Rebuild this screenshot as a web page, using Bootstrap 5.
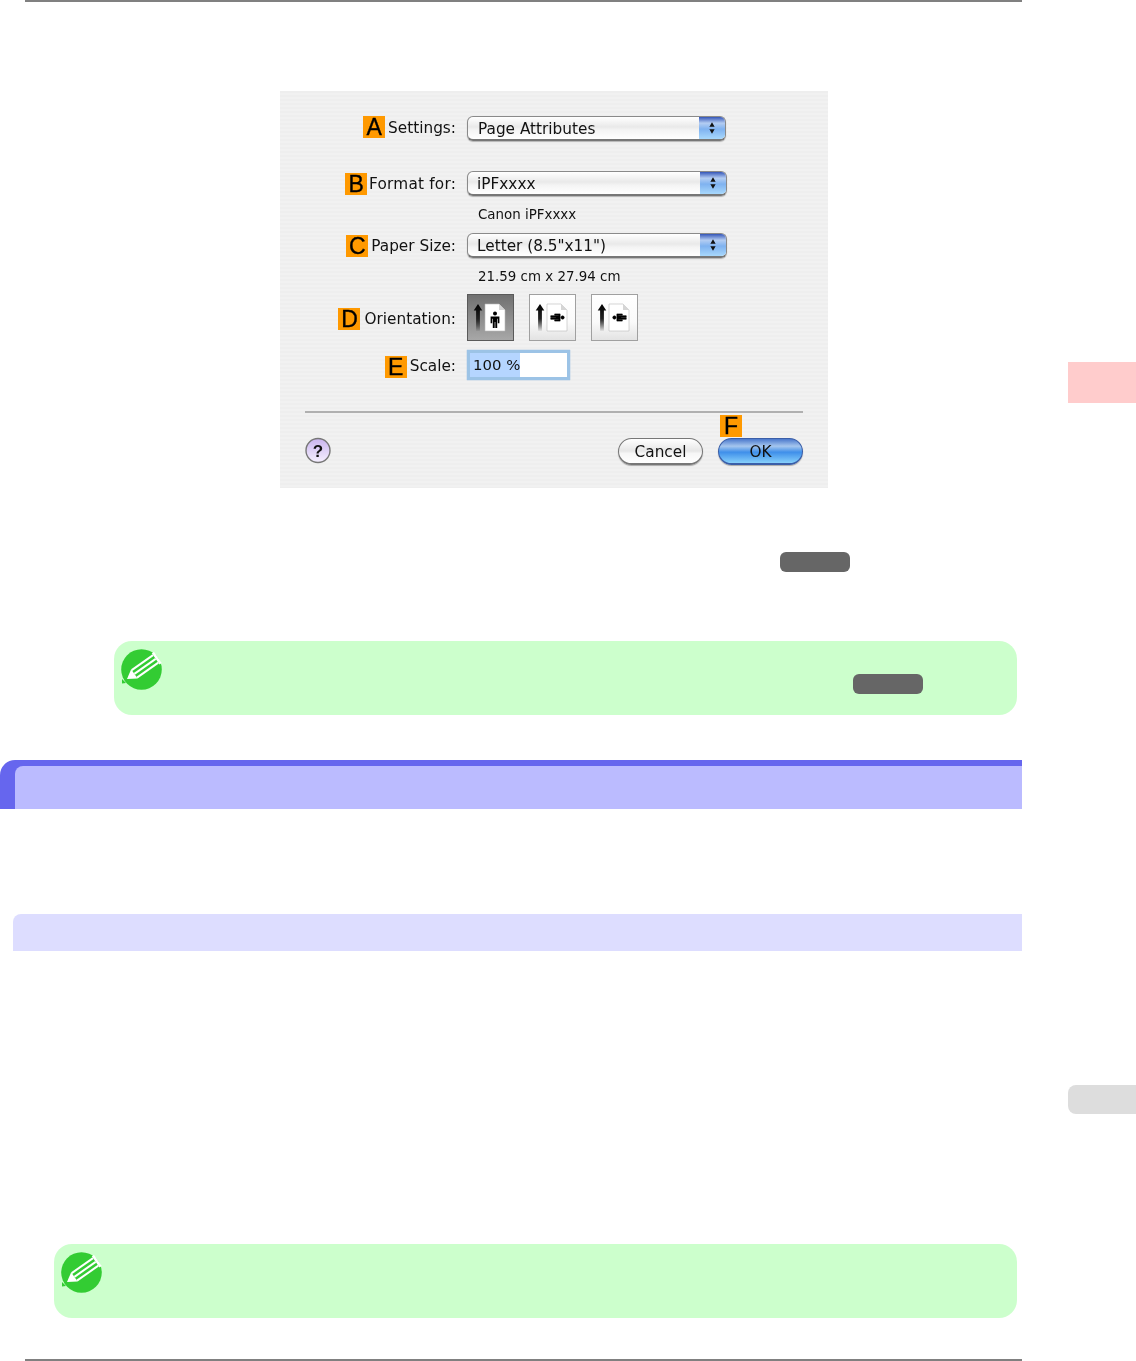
<!DOCTYPE html>
<html lang="en">
<head>
<meta charset="utf-8">
<title>Page Attributes</title>
<link href="https://cdn.jsdelivr.net/npm/bootstrap@5.3.0/dist/css/bootstrap.min.css" rel="stylesheet">
<style>
html,body{margin:0;background:#fff}
.sheet{width:1136px;height:1361px;overflow:hidden}
.main-col{width:1022px;flex:none}
.side-col{width:114px;flex:none;padding-left:46px}
.tab-pink{height:41px;margin-top:362px;background:#ffcccc}
.tab-grey{height:29px;margin-top:682px;background:#dddddd;border-radius:8px 0 0 8px}
.rule-top{height:2px;margin-left:25px;background:#808080}
.rule-bottom{height:2px;margin-left:25px;margin-top:41px;background:#808080}
.dlg{width:548px;height:397px;margin-left:280px;margin-top:89px;padding:25px 25px 0 0;font-family:"DejaVu Sans",sans-serif;font-size:15.3px;color:#111;line-height:1;
background:repeating-linear-gradient(180deg,#eeeeee 0,#eeeeee 2px,#f1f1f1 2px,#f1f1f1 4px);filter:blur(.45px)}
.lbl{width:176px;flex:none;margin-right:11px;gap:3px}
.key{width:22px;height:22px;background:#ff9900;color:#000;font-family:"Liberation Sans",sans-serif;font-size:23px;line-height:22px;text-align:center;-webkit-text-stroke:.35px #000}
.pop{width:259px;height:25px;border:1px solid #8a8a8a;border-bottom:2px solid #777;border-radius:6px;background:linear-gradient(180deg,#fff 0,#e9e9e9 45%,#f4f4f4 60%,#fff 100%);padding-left:10px;overflow:hidden;box-shadow:0 1px 1px rgba(0,0,0,.25)}
.pop span{padding-top:4px}
.pop.wide{padding-left:9px;width:260px}
.pop-arrows{width:26px;height:100%;background:linear-gradient(180deg,#3556b8 0,#b4cdf2 28%,#7fb2f0 55%,#a8d8fc 100%)}
.mt-b{margin-top:30px}.mt-s1{margin-top:10px}.mt-c{margin-top:11px}.mt-d{margin-top:10px}.mt-e{margin-top:9px}
.subtxt{margin-left:198px;height:16px;line-height:18px;font-size:13.4px}
.ori{width:47px;height:47px;flex:none;display:block}
.ori-gap{gap:15px}
.row-a .key{margin-top:-3px}
.row-b .lbl{gap:2px}
.row-b .lbl,.row-c .lbl{padding-top:3px}
.row-b .key,.row-c .key{margin-top:-2px}
.row-b .lbl span:last-child{letter-spacing:.2px}
.row-d .lbl{padding-top:4px;gap:4px}
.row-d .key{margin-top:-2px}
.row-e .lbl{padding-top:3px;gap:3px}
.row-e .key{margin-top:1px}
.scale-box{width:103px;height:30px;border:3px solid #9cc3e6;background:#fff;box-shadow:0 0 1px #6fa3d8;line-height:24px}
.sel-text{display:inline-block;height:24px;background:#b5d5ff;padding:0 0 0 3px;font-size:14.9px}
.sep{height:2px;margin:31px 0 0 25px;width:498px;background:#b0b0b0}
.foot{margin-left:25px;width:498px;margin-top:2px}
.help{width:26px;height:27px;display:block;margin-bottom:1px}
.pill-btn{width:85px;height:27px;border-radius:14px;border:1px solid #777;border-bottom-width:2px;text-align:center;line-height:26px;box-shadow:0 1px 1px rgba(0,0,0,.3)}
.pill-cancel{background:linear-gradient(180deg,#fff 0,#e6e6e6 50%,#f6f6f6 60%,#fff 100%)}
.pill-ok{background:linear-gradient(180deg,#4a78cc 0,#a5c6ee 30%,#3f8fea 55%,#86d0fb 100%);border-color:#3a5ea8}
.ok-col{margin-left:15px}
.key-f{margin:0 0 1px 2px}
.grey-pill{width:70px;height:20px;background:#666666;border-radius:6px}
.pill-page{margin:64px 0 0 780px}
.note-box{height:74px;background:#ccffcc;border-radius:18px;padding:8px 0 0 7px}
.note-a{margin:69px 0 0 114px;width:903px}
.note-b{margin:0 0 0 54px;width:963px}
.note-ic{width:41px;height:41px;flex:none;overflow:visible;display:block}
.note-pill{margin:25px 94px 0 auto}
.h-main{height:49px;margin-top:45px;background:#6666ee;padding:6px 0 0 15px;border-top-left-radius:15px}
.h-main-in{height:43px;background:#bbbbff;border-top-left-radius:8px}
.h-sub{height:37px;margin:105px 0 0 13px;background:#ddddff;border-top-left-radius:8px}
.gap-note{margin-top:293px}
</style>
</head>
<body>
<div class="sheet d-flex">
  <div class="main-col">
    <div class="rule-top"></div>

    <div class="dlg">
      <div class="row-a d-flex align-items-center">
        <div class="lbl d-flex justify-content-end align-items-center"><span class="key">A</span><span>Settings:</span></div>
        <div class="pop d-flex align-items-center justify-content-between"><span>Page Attributes</span>
          <svg class="pop-arrows" viewBox="0 0 26 25"><path d="M13 6l3 5h-6zM13 19l3-5h-6z" fill="#111"/></svg></div>
      </div>
      <div class="row-b d-flex align-items-center mt-b">
        <div class="lbl d-flex justify-content-end align-items-center"><span class="key">B</span><span>Format for:</span></div>
        <div class="pop wide d-flex align-items-center justify-content-between"><span>iPFxxxx</span>
          <svg class="pop-arrows" viewBox="0 0 26 25"><path d="M13 6l3 5h-6zM13 19l3-5h-6z" fill="#111"/></svg></div>
      </div>
      <div class="subtxt mt-s1">Canon iPFxxxx</div>
      <div class="row-c d-flex align-items-center mt-c">
        <div class="lbl d-flex justify-content-end align-items-center"><span class="key">C</span><span>Paper Size:</span></div>
        <div class="pop wide d-flex align-items-center justify-content-between"><span>Letter (8.5"x11")</span>
          <svg class="pop-arrows" viewBox="0 0 26 25"><path d="M13 6l3 5h-6zM13 19l3-5h-6z" fill="#111"/></svg></div>
      </div>
      <div class="subtxt mt-s1">21.59 cm x 27.94 cm</div>
      <div class="row-d d-flex align-items-center mt-d">
        <div class="lbl d-flex justify-content-end align-items-center"><span class="key">D</span><span>Orientation:</span></div>
        <div class="d-flex ori-gap">
          <svg class="ori" viewBox="0 0 47 47">
            <defs>
              <linearGradient id="gDark" x1="0" y1="0" x2="0" y2="1"><stop offset="0" stop-color="#707070"/><stop offset="1" stop-color="#a8a8a8"/></linearGradient>
              <linearGradient id="gLight" x1="0" y1="0" x2="0" y2="1"><stop offset="0" stop-color="#ffffff"/><stop offset=".6" stop-color="#fafafa"/><stop offset="1" stop-color="#e2e2e2"/></linearGradient>
              <linearGradient id="gArrow" x1="0" y1="0" x2="0" y2="1"><stop offset="0" stop-color="#000"/><stop offset=".55" stop-color="#222"/><stop offset="1" stop-color="#000" stop-opacity=".05"/></linearGradient>
              <g id="oPage">
                <path d="M11 10l4.3 6.4h-2.4V37H9.1V16.4H6.7z" fill="url(#gArrow)"/>
                <path d="M18 10h14l6 6v21H18z" fill="#fff" stroke="#b8b8b8" stroke-width=".6"/>
                <path d="M32 10v6h6z" fill="#d5d5d5"/>
              </g>
              <g id="oMan">
                <circle cx="28" cy="19.6" r="2"/>
                <path d="M23.6 22.6h8.8v6.6h-1.6v-4.4h-.6v9.2h-1.9V28h-.6v6h-1.9v-9.2h-.6v4.4h-1.6z"/>
              </g>
            </defs>
            <rect x=".5" y=".5" width="46" height="46" fill="url(#gDark)" stroke="#5a5a5a"/>
            <use href="#oPage"/><use href="#oMan"/>
          </svg>
          <svg class="ori" viewBox="0 0 47 47">
            <rect x=".5" y=".5" width="46" height="46" fill="url(#gLight)" stroke="#a0a0a0"/>
            <use href="#oPage"/><use href="#oMan" stroke="#000" stroke-width=".7" transform="translate(28.5 23.5) rotate(90) scale(.82) translate(-28 -25.8)"/>
          </svg>
          <svg class="ori" viewBox="0 0 47 47">
            <rect x=".5" y=".5" width="46" height="46" fill="url(#gLight)" stroke="#a0a0a0"/>
            <use href="#oPage"/><use href="#oMan" stroke="#000" stroke-width=".7" transform="translate(28.5 23.5) rotate(-90) scale(.82) translate(-28 -25.8)"/>
          </svg>
        </div>
      </div>
      <div class="row-e d-flex align-items-center mt-e">
        <div class="lbl d-flex justify-content-end align-items-center"><span class="key">E</span><span>Scale:</span></div>
        <div class="scale-box"><span class="sel-text">100 %</span></div>
      </div>
      <div class="sep"></div>
      <div class="foot d-flex align-items-end">
        <svg class="help" viewBox="0 0 26 27">
          <defs><linearGradient id="gHelp" x1="0" y1="0" x2="0" y2="1"><stop offset="0" stop-color="#c9b4ee"/><stop offset="1" stop-color="#f6f0ff"/></linearGradient></defs>
          <circle cx="13" cy="13.5" r="12" fill="url(#gHelp)" stroke="#777" stroke-width="1.4"/>
          <text x="13" y="19.5" text-anchor="middle" font-family="Liberation Sans, sans-serif" font-weight="700" font-size="17" fill="#111">?</text>
        </svg>
        <div class="pill-btn pill-cancel ms-auto">Cancel</div>
        <div class="ok-col d-flex flex-column">
          <div class="key key-f">F</div>
          <div class="pill-btn pill-ok">OK</div>
        </div>
      </div>
    </div>

    <div class="grey-pill pill-page"></div>

    <div class="note-box note-a d-flex align-items-start">
      <svg class="note-ic" viewBox="0 0 41 41"><circle cx="20.5" cy="20.5" r="20.3" fill="#33cc33"/><path d="M1 30l4 4-4 .5z" fill="#33cc33"/>
        <g transform="translate(6 30) rotate(-35)" fill="#fff"><path d="M0 0l9-5.6v11.2z"/><rect x="9" y="-5.6" width="26" height="2"/><rect x="9" y="-1" width="26" height="2"/><rect x="9" y="3.6" width="26" height="2"/><rect x="35" y="-6.8" width="2.6" height="13.6"/></g></svg>
      <div class="grey-pill note-pill"></div>
    </div>

    <div class="h-main"><div class="h-main-in"></div></div>
    <div class="h-sub"></div>

    <div class="gap-note note-box note-b">
      <svg class="note-ic" viewBox="0 0 41 41"><circle cx="20.5" cy="20.5" r="20.3" fill="#33cc33"/><path d="M1 30l4 4-4 .5z" fill="#33cc33"/>
        <g transform="translate(6 30) rotate(-35)" fill="#fff"><path d="M0 0l9-5.6v11.2z"/><rect x="9" y="-5.6" width="26" height="2"/><rect x="9" y="-1" width="26" height="2"/><rect x="9" y="3.6" width="26" height="2"/><rect x="35" y="-6.8" width="2.6" height="13.6"/></g></svg>
    </div>

    <div class="rule-bottom"></div>
  </div>
  <div class="side-col">
    <div class="tab-pink"></div>
    <div class="tab-grey"></div>
  </div>
</div>
<script src="https://cdn.jsdelivr.net/npm/bootstrap@5.3.0/dist/js/bootstrap.bundle.min.js"></script>
</body>
</html>
